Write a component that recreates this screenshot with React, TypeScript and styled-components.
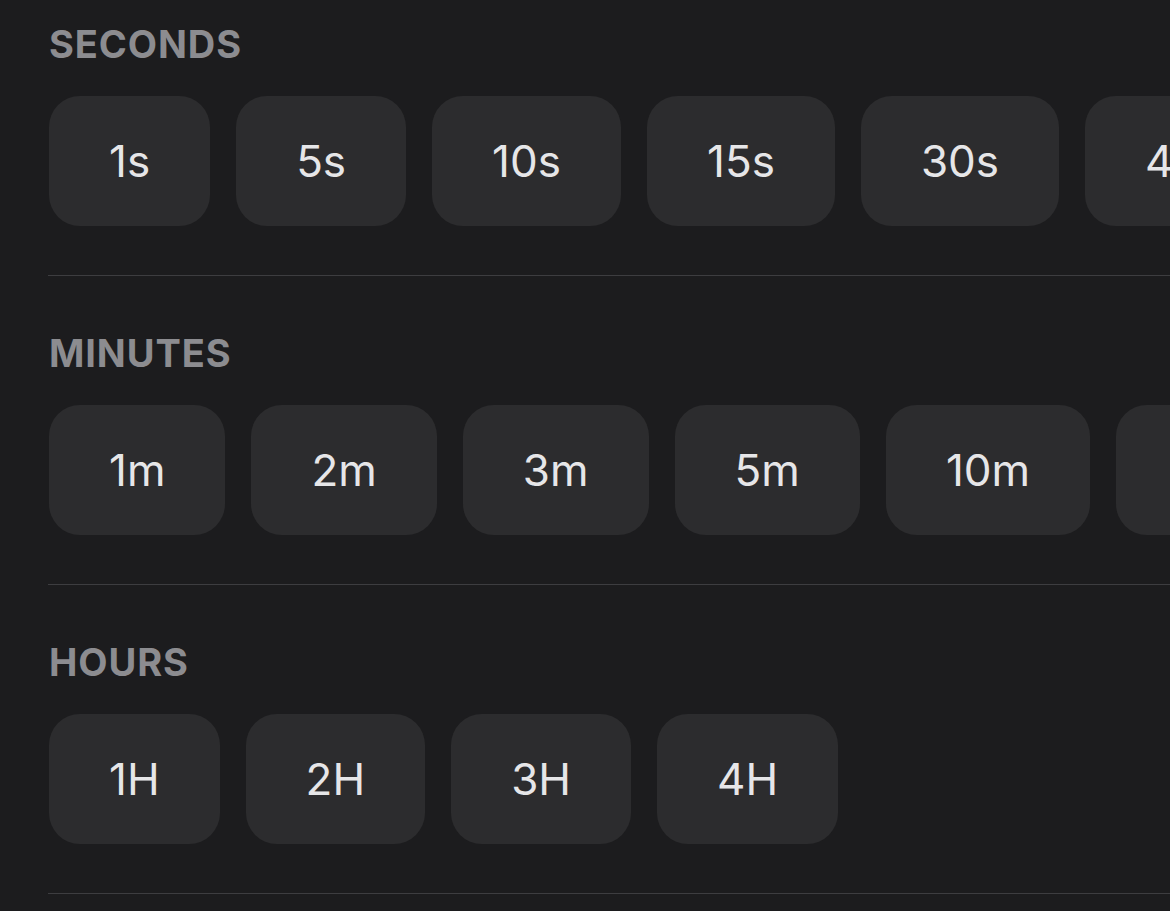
import React from "react";
import styled, { createGlobalStyle } from "styled-components";

const GlobalStyle = createGlobalStyle`
  html, body {
    margin: 0;
    padding: 0;
    background-color: #1c1c1e;
  }

  body {
    font-family: Inter, "Liberation Sans", sans-serif;
    -webkit-font-smoothing: antialiased;
  }
`;

type Group = {
  title: string;
  options: string[];
};

const groups: Group[] = [
  { title: "Seconds", options: ["1s", "5s", "10s", "15s", "30s", "45s"] },
  { title: "Minutes", options: ["1m", "2m", "3m", "5m", "10m", "15m"] },
  { title: "Hours", options: ["1H", "2H", "3H", "4H"] },
];

const App = () => {
  return (
    <>
      <GlobalStyle />
      <Page>
        {groups.map((group) => (
          <Section key={group.title}>
            <Label>{group.title}</Label>
            <ChipRow>
              {group.options.map((option) => (
                <Chip key={option} type="button">
                  {option}
                </Chip>
              ))}
            </ChipRow>
          </Section>
        ))}
      </Page>
    </>
  );
};

const Page = styled.main`
  width: 100%;
  min-height: 911px;
  box-sizing: border-box;
  padding: 21px 0 0 48px;
  background-color: #1c1c1e;
  overflow: hidden;
`;

const Section = styled.section`
  padding-bottom: 49px;
  margin-bottom: 54px;
  border-bottom: 1px solid #3d3d40;
`;

const Label = styled.h2`
  margin: 0 0 29px 1px;
  font-size: 38px;
  line-height: 46px;
  font-weight: 700;
  text-transform: uppercase;
  letter-spacing: 0.9px;
  color: #8c8c90;
`;

const ChipRow = styled.div`
  display: flex;
  flex-wrap: nowrap;
  gap: 26px;
  padding-left: 1px;
`;

const Chip = styled.button`
  flex: none;
  height: 130px;
  padding: 0 60px;
  border: none;
  border-radius: 31px;
  background-color: #2c2c2e;
  color: #e6e6e8;
  font-family: Inter, "Liberation Sans", sans-serif;
  font-size: 44px;
  font-weight: 400;
  line-height: 1;
  cursor: pointer;
`;

export default App;
